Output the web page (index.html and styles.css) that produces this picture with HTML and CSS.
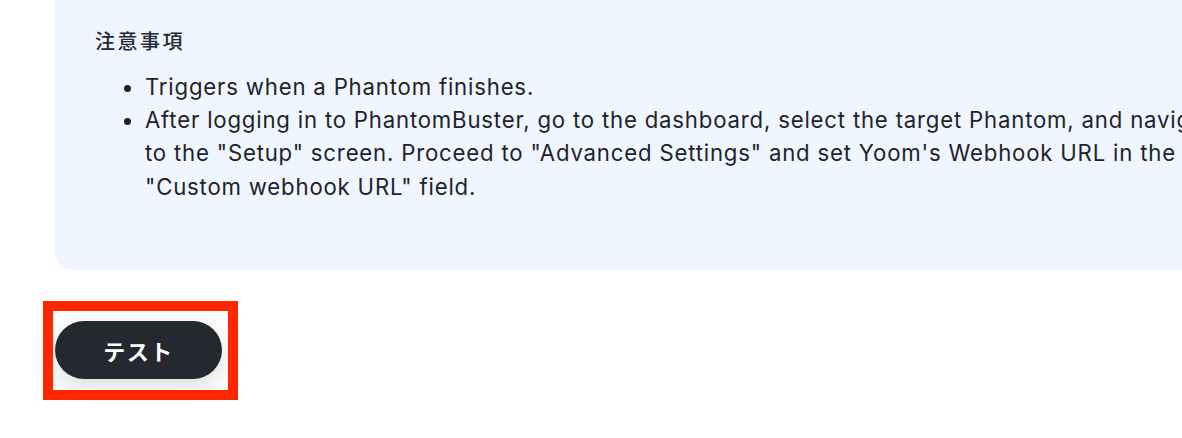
FILE: index.html
```html
<!DOCTYPE html>
<html lang="ja">
<head>
<meta charset="utf-8">
<link rel="stylesheet" href="styles.css">
</head>
<body>
<div class="page">
  <section class="notice">
    <h3 class="notice-title">注意事項</h3>
    <ul class="notice-list">
      <li>Triggers when a Phantom finishes.</li>
      <li>After logging in to PhantomBuster, go to the dashboard, select the target Phantom, and navigate to the "Setup" screen. Proceed to "Advanced Settings" and set Yoom's Webhook URL in the "Custom webhook URL" field.</li>
    </ul>
  </section>
  <div class="actions">
    <button class="btn-test">テスト</button>
    <span class="highlight"></span>
  </div>
</div>
</body>
</html>
```

FILE: styles.css
```css
html {
  overflow: hidden;
}
html, body {
  margin: 0;
  padding: 0;
  background: #ffffff;
}
body {
  font-family: Inter, "Noto Sans CJK JP", sans-serif;
  color: #1f2328;
  height: 438px;
}
.page {
  width: 1225px;
  padding-left: 55px;
  margin-top: -30px;
}
.notice {
  background: #eff6ff;
  border-radius: 16px;
  padding: 55px 40px 67px 40px;
}
.notice-title {
  margin: 0;
  font-size: 20px;
  font-weight: 500;
  letter-spacing: 2.5px;
  line-height: 34px;
  color: #24292f;
}
.notice-list {
  margin: 11px 0 0 0;
  padding-left: 50px;
  font-size: 22.2px;
  letter-spacing: 0.8px;
  line-height: 33.2px;
}
.actions {
  position: relative;
  margin-top: 51px;
  width: 167px;
}
.btn-test {
  display: block;
  width: 167px;
  height: 58px;
  border: none;
  border-radius: 29px;
  background: #24282f;
  color: #ffffff;
  font-family: "Noto Sans CJK JP", Inter, sans-serif;
  font-size: 22px;
  font-weight: 700;
  letter-spacing: 1.5px;
  box-shadow: 0 8px 24px rgba(0, 0, 0, 0.14);
}
.highlight {
  position: absolute;
  left: -12px;
  top: -20px;
  width: 175px;
  height: 79px;
  border: 10px solid #ff2600;
}
```
